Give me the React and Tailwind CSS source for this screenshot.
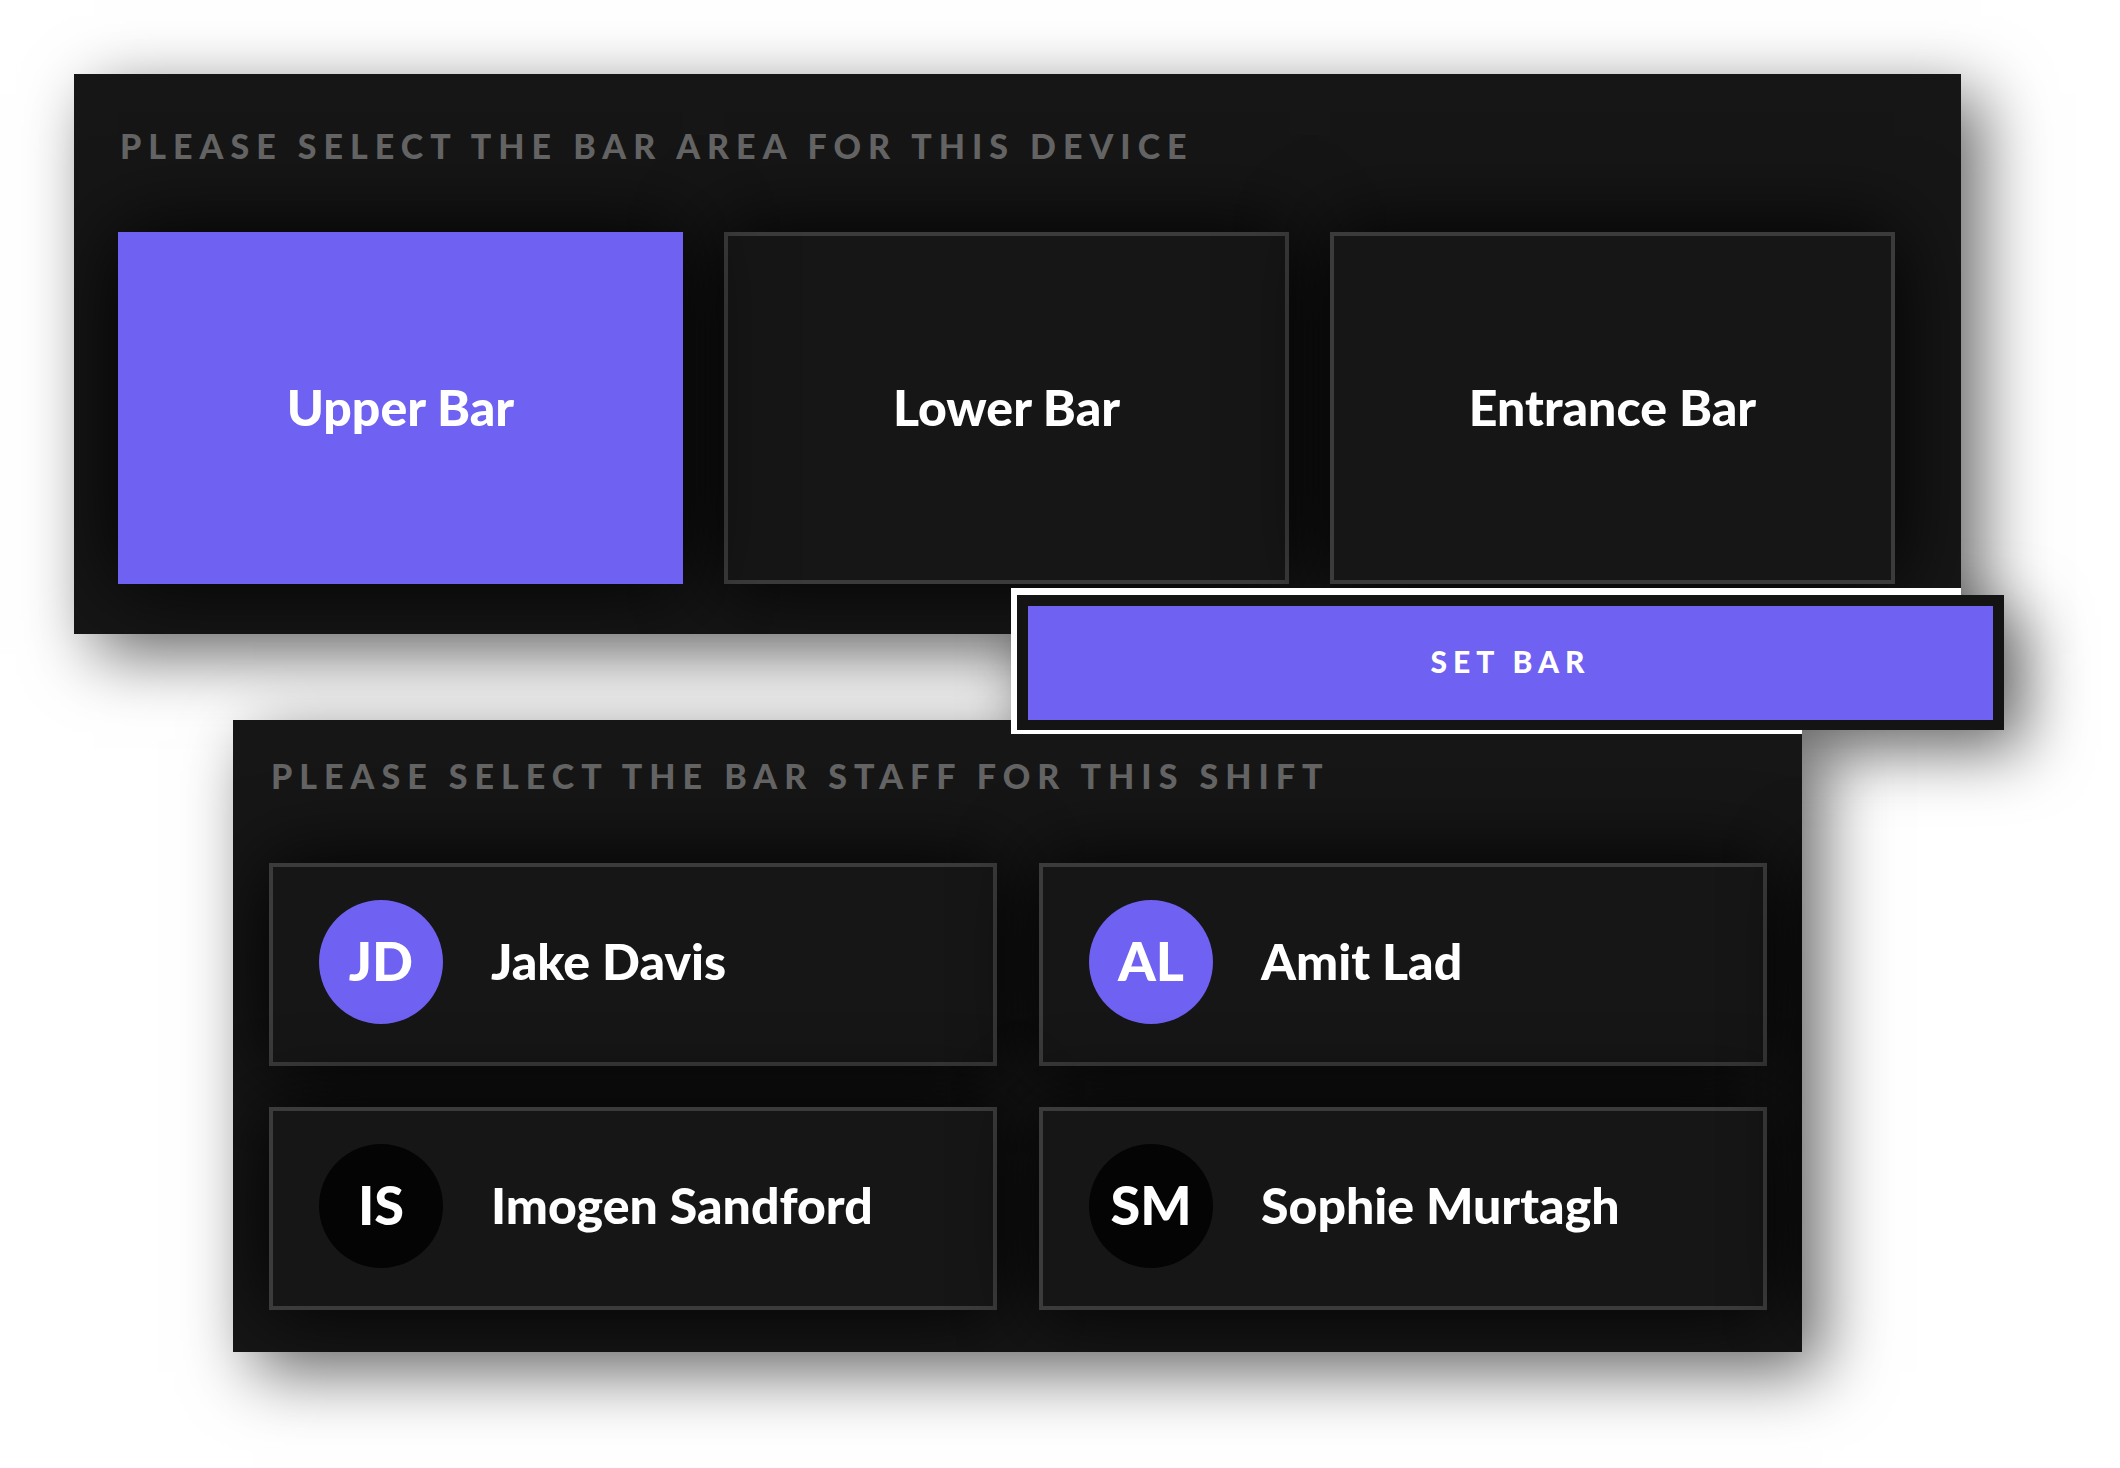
import { useState } from "react";

const bars = ["Upper Bar", "Lower Bar", "Entrance Bar"];

const staff = [
  { initials: "JD", name: "Jake Davis", onShift: true },
  { initials: "AL", name: "Amit Lad", onShift: true },
  { initials: "IS", name: "Imogen Sandford", onShift: false },
  { initials: "SM", name: "Sophie Murtagh", onShift: false },
];

const panelShadow = "shadow-[20px_20px_64px_rgba(0,0,0,0.6)]";
const cardShadow = "shadow-[0_0_80px_#000000]";

function BarCard({ name, selected, onSelect }) {
  return (
    <button
      type="button"
      aria-pressed={selected}
      onClick={onSelect}
      className={`flex h-88 items-center justify-center border-4 pb-0.5 text-[50px] leading-15 font-black text-white ${cardShadow} ${
        selected ? "relative z-10 border-[#6f61f1] bg-[#6f61f1]" : "border-[#3b3b3b] bg-[#161616]"
      }`}
    >
      {name}
    </button>
  );
}

function StaffCard({ initials, name, active, onToggle }) {
  return (
    <button
      type="button"
      aria-pressed={active}
      onClick={onToggle}
      className={`flex items-center gap-12 border-4 border-[#3b3b3b] bg-[#161616] px-[46px] pt-[33px] pb-[38px] text-left text-[50px] leading-15 font-black text-white ${cardShadow}`}
    >
      <span
        className={`flex size-31 shrink-0 items-center justify-center rounded-full pb-0.5 text-[54px] ${
          active ? "bg-[#6f61f1]" : "bg-[#040404]"
        }`}
      >
        {initials}
      </span>
      <span className="pb-0.5">{name}</span>
    </button>
  );
}

export default function App() {
  const [bar, setBar] = useState("Upper Bar");
  const [onShift, setOnShift] = useState(staff.filter((s) => s.onShift).map((s) => s.name));

  const toggle = (name) =>
    setOnShift((list) => (list.includes(name) ? list.filter((n) => n !== name) : [...list, name]));

  return (
    <main className="isolate flex min-h-screen flex-col overflow-hidden bg-white pt-[74px] pr-[116px] pb-[116px] pl-[74px] font-['Lato',sans-serif]">
      <section className={`relative z-10 mr-[43px] overflow-hidden bg-[#161616] pt-[52px] pr-[66px] pb-[50px] pl-11 ${panelShadow}`}>
        <h1 className="relative z-20 px-0.5 text-[34px] leading-10 font-black tracking-[7px] text-[#636363] uppercase">
          Please select the bar area for this device
        </h1>
        <div className="mt-[66px] grid grid-cols-3 gap-[41px]">
          {bars.map((name) => (
            <BarCard key={name} name={name} selected={bar === name} onSelect={() => setBar(name)} />
          ))}
        </div>
      </section>

      <div className="relative -mt-[46px] ml-[937px] pt-[7px] pb-1 pl-1.5">
        <div className={`absolute top-[7px] right-0 bottom-1 left-0 ${panelShadow}`} />
        <div className="absolute inset-y-0 right-[202px] left-0 z-20 bg-white" />
        <div className="absolute top-0 right-[43px] left-0 z-20 h-[7px] bg-white" />
        <div className="relative z-30 bg-[#141414] px-[11px] pt-[11px] pb-2.5">
          <button
            type="button"
            className="flex h-[114px] w-full items-center justify-center bg-[#6f61f1] pb-1 text-3xl font-black tracking-[6px] text-white uppercase"
          >
            Set Bar
          </button>
        </div>
      </div>

      <section className={`relative z-10 -mt-[14px] mr-[202px] ml-[159px] overflow-hidden bg-[#161616] pt-9 pr-[35px] pb-[42px] pl-9 ${panelShadow}`}>
        <h2 className="relative z-20 px-0.5 text-[34px] leading-10 font-black tracking-[7px] text-[#636363] uppercase">
          Please select the bar staff for this shift
        </h2>
        <div className="mt-[67px] grid grid-cols-2 gap-x-[42px] gap-y-[41px]">
          {staff.map((s) => (
            <StaffCard
              key={s.name}
              initials={s.initials}
              name={s.name}
              active={onShift.includes(s.name)}
              onToggle={() => toggle(s.name)}
            />
          ))}
        </div>
        <div className={`pointer-events-none absolute top-36 bottom-[42px] left-full ml-2 w-40 ${cardShadow}`} />
      </section>
    </main>
  );
}
